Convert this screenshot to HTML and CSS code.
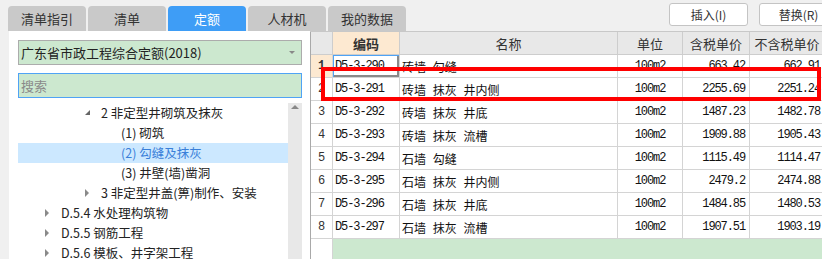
FILE: index.html
```html
<!DOCTYPE html>
<html lang="zh-CN">
<head>
    <meta charset="UTF-8">
    <title>定额</title>
    <link rel="stylesheet" href="styles.css">
</head>
<body>
    <div class="app">
        <div class="topbar">
            <div class="tabs">
                <div class="tab">清单指引</div>
                <div class="tab">清单</div>
                <div class="tab active">定额</div>
                <div class="tab">人材机</div>
                <div class="tab">我的数据</div>
            </div>
            <div class="actions">
                <button class="btn">插入(I)</button>
                <button class="btn">替换(R)</button>
            </div>
        </div>

        <div class="main">
            <aside class="side">
                <div class="select">
                    <span>广东省市政工程综合定额(2018)</span>
                    <span class="caret"></span>
                </div>
                <input class="search" type="text" placeholder="搜索">
                <div class="tree">
                    <ul class="tree-list">
                        <li class="node lv2"><span class="tog open"></span>2 非定型井砌筑及抹灰</li>
                        <li class="node lv3">(1) 砌筑</li>
                        <li class="node lv3 current">(2) 勾缝及抹灰</li>
                        <li class="node lv3">(3) 井壁(墙)凿洞</li>
                        <li class="node lv2"><span class="tog"></span>3 非定型井盖(箅)制作、安装</li>
                        <li class="node lv1"><span class="tog"></span>D.5.4 水处理构筑物</li>
                        <li class="node lv1"><span class="tog"></span>D.5.5 钢筋工程</li>
                        <li class="node lv1"><span class="tog"></span>D.5.6 模板、井字架工程</li>
                    </ul>
                    <div class="scrollbar"><span class="arrow-up"></span></div>
                </div>
            </aside>

            <section class="grid">
                <table class="quota-table">
                    <colgroup>
                        <col style="width:22px">
                        <col style="width:67px">
                        <col style="width:218px">
                        <col style="width:65px">
                        <col style="width:67px">
                        <col style="width:75px">
                    </colgroup>
                    <thead>
                        <tr>
                            <th class="num"></th>
                            <th class="key">编码</th>
                            <th>名称</th>
                            <th>单位</th>
                            <th>含税单价</th>
                            <th>不含税单价</th>
                        </tr>
                    </thead>
                    <tbody>
                        <tr class="selected">
                            <td class="num">1</td>
                            <td class="code focus">D5-3-290</td>
                            <td class="name">砖墙 勾缝</td>
                            <td class="unit">100m2</td>
                            <td class="price">663.42</td>
                            <td class="price">662.91</td>
                        </tr>
                        <tr>
                            <td class="num">2</td>
                            <td class="code">D5-3-291</td>
                            <td class="name">砖墙 抹灰 井内侧</td>
                            <td class="unit">100m2</td>
                            <td class="price">2255.69</td>
                            <td class="price">2251.24</td>
                        </tr>
                        <tr>
                            <td class="num">3</td>
                            <td class="code">D5-3-292</td>
                            <td class="name">砖墙 抹灰 井底</td>
                            <td class="unit">100m2</td>
                            <td class="price">1487.23</td>
                            <td class="price">1482.78</td>
                        </tr>
                        <tr>
                            <td class="num">4</td>
                            <td class="code">D5-3-293</td>
                            <td class="name">砖墙 抹灰 流槽</td>
                            <td class="unit">100m2</td>
                            <td class="price">1909.88</td>
                            <td class="price">1905.43</td>
                        </tr>
                        <tr>
                            <td class="num">5</td>
                            <td class="code">D5-3-294</td>
                            <td class="name">石墙 勾缝</td>
                            <td class="unit">100m2</td>
                            <td class="price">1115.49</td>
                            <td class="price">1114.47</td>
                        </tr>
                        <tr>
                            <td class="num">6</td>
                            <td class="code">D5-3-295</td>
                            <td class="name">石墙 抹灰 井内侧</td>
                            <td class="unit">100m2</td>
                            <td class="price">2479.2</td>
                            <td class="price">2474.88</td>
                        </tr>
                        <tr>
                            <td class="num">7</td>
                            <td class="code">D5-3-296</td>
                            <td class="name">石墙 抹灰 井底</td>
                            <td class="unit">100m2</td>
                            <td class="price">1484.85</td>
                            <td class="price">1480.53</td>
                        </tr>
                        <tr>
                            <td class="num">8</td>
                            <td class="code">D5-3-297</td>
                            <td class="name">石墙 抹灰 流槽</td>
                            <td class="unit">100m2</td>
                            <td class="price">1907.51</td>
                            <td class="price">1903.19</td>
                        </tr>
                        <tr class="filler">
                            <td class="num"></td>
                            <td colspan="5" class="blank"></td>
                        </tr>
                    </tbody>
                </table>
            </section>
        </div>

        <!-- 标注框 -->
        <div class="mark"></div>
    </div>
</body>
</html>
```

FILE: styles.css
```css
:root {
    --blue: #3e9df6;
    --green: #cce8cf;
    --peach: #fde9d1;
    --line: #d4d4d4;
    --text: #222;
}

* {
    margin: 0;
    padding: 0;
    box-sizing: border-box;
}

html, body {
    width: 822px;
    height: 259px;
    overflow: hidden;
}

body {
    font-family: "Noto Sans CJK SC", "Noto Sans", sans-serif;
    font-size: 12px;
    color: var(--text);
    background-color: #f0f0f0;
}

.app {
    position: relative;
    width: 840px;
    height: 259px;
}

/* 顶部 */
.topbar {
    height: 31px;
    display: flex;
}

.tabs {
    display: flex;
    gap: 2px;
    padding-left: 8px;
    align-self: flex-end;
}

.tab {
    width: 78px;
    height: 25px;
    line-height: 25px;
    text-align: center;
    font-size: 13px;
    color: #333;
    background-color: #c9c9c9;
    border-radius: 4px 4px 0 0;
}

.tab.active {
    background-color: var(--blue);
    color: #fff;
}

.actions {
    margin-left: auto;
    margin-right: 2px;
    padding-top: 3px;
    display: flex;
    gap: 11px;
}

.btn {
    width: 79px;
    height: 23px;
    border: 1px solid #c4c4c4;
    border-radius: 3px;
    background-color: #fff;
    font-family: inherit;
    font-size: 12px;
    color: #333;
}

/* 主体 */
.main {
    display: flex;
    height: 228px;
}

.side {
    width: 301px;
    margin-left: 9px;
    padding: 9px 8px 0 9px;
    background-color: #fff;
    display: flex;
    flex-direction: column;
}

.select {
    height: 25px;
    border: 1px solid #acacac;
    background-color: var(--green);
    display: flex;
    align-items: center;
    padding-left: 2px;
    font-size: 13px;
    color: #222;
}

.caret {
    margin-left: auto;
    margin-right: 6px;
    width: 0;
    height: 0;
    border-left: 3px solid transparent;
    border-right: 3px solid transparent;
    border-top: 3px solid #888;
}

.search {
    margin-top: 8px;
    height: 25px;
    border: 1px solid #4fa3f5;
    background-color: var(--green);
    padding-left: 2px;
    font-family: inherit;
    font-size: 13px;
    outline: none;
}

.search::placeholder {
    color: #8a8a8a;
}

.tree {
    margin-top: 5px;
    flex: 1;
    display: flex;
    overflow: hidden;
}

.tree-list {
    flex: 1;
    list-style: none;
}

.node {
    height: 20px;
    line-height: 20px;
    display: flex;
    align-items: center;
    white-space: nowrap;
    font-size: 12.5px;
    color: #222;
}

.node.lv1 { padding-left: 27px; }
.node.lv2 { padding-left: 67px; }
.node.lv3 { padding-left: 103px; }

.node.current {
    background-color: #cce8ff;
    color: #3a7fd9;
}

.tog {
    width: 16px;
    height: 20px;
    flex-shrink: 0;
    position: relative;
}

.tog::before {
    content: "";
    position: absolute;
    left: 0;
    top: 6px;
    border-top: 4px solid transparent;
    border-bottom: 4px solid transparent;
    border-left: 4px solid #8a8a8a;
}

.tog.open::before {
    top: 7px;
    border-top: none;
    border-left: 5px solid transparent;
    border-bottom: 5px solid #666;
}

.scrollbar {
    width: 14px;
    background-color: #e8e8e8;
    position: relative;
}

.arrow-up {
    position: absolute;
    left: 3px;
    top: 2px;
    border-left: 4px solid transparent;
    border-right: 4px solid transparent;
    border-bottom: 4px solid #888;
}

/* 表格 */
.grid {
    flex: 1;
    border-top: 1px solid #c8c8c8;
    background-color: #fff;
    overflow: hidden;
}

.quota-table {
    border-collapse: separate;
    border-spacing: 0;
    table-layout: fixed;
    width: 514px;
    border-left: 1px solid #a9a9a9;
}

.quota-table tr {
    height: 23px;
}

.quota-table th,
.quota-table td {
    padding: 0;
    border-right: 1px solid var(--line);
    border-bottom: 1px solid var(--line);
    white-space: nowrap;
    overflow: hidden;
}

.quota-table th {
    background-color: #e8e8e8;
    font-weight: normal;
    font-size: 13px;
    color: #333;
    border-color: #cdcdcd;
}

.quota-table th.key {
    background-color: var(--peach);
    font-weight: bold;
}

.quota-table td.num {
    text-align: center;
    font-family: "Liberation Mono", monospace;
    font-size: 12px;
    color: #333;
}

.selected td.num {
    background-color: var(--peach);
    font-weight: bold;
}

.code,
.unit,
.price {
    font-family: "Liberation Mono", monospace;
    font-size: 12px;
    letter-spacing: -1.1px;
    color: #111;
}

.code {
    padding-left: 2px !important;
}

.unit {
    text-align: center;
}

.price {
    text-align: right;
    padding-right: 4px !important;
}

.name {
    padding-left: 2px !important;
    word-spacing: 4px;
    color: #111;
}

.focus {
    box-shadow: inset 1px 1px 0 #4fa3f5, inset -2px -2px 0 #8a8a8a;
}

.filler {
    height: 20px !important;
}

.filler td {
    border-bottom: none !important;
}

.filler td.blank {
    background-color: var(--green);
    border-right: none;
}

/* 红色标注 */
.mark {
    position: absolute;
    left: 321px;
    top: 67px;
    width: 500px;
    height: 34px;
    border: 4px solid #ff0000;
}
```
